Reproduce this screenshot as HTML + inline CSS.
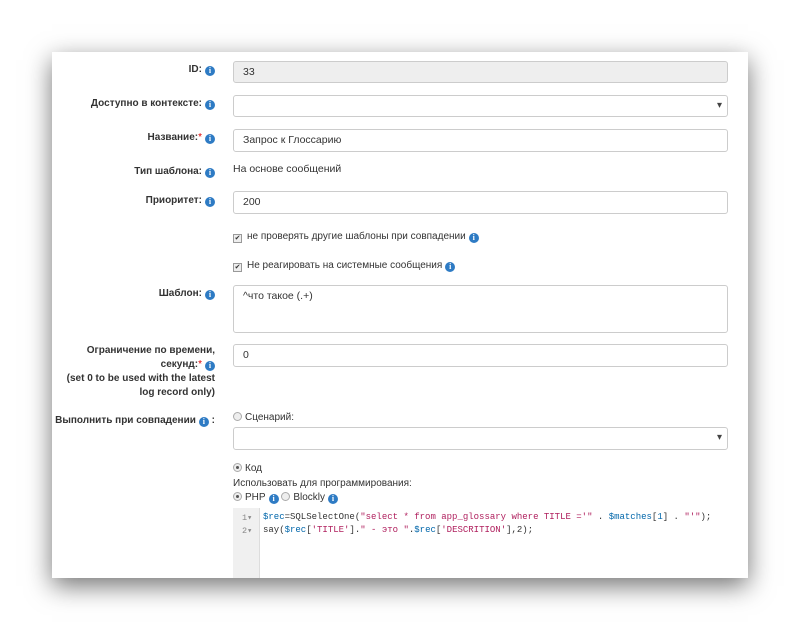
<!DOCTYPE html>
<html><head><meta charset="utf-8"><style>
body{margin:0;width:800px;height:630px;background:#fff;font-family:"Liberation Sans",sans-serif;font-size:10px;color:#333;position:relative;overflow:hidden}
.panel{position:absolute;left:52px;top:52px;width:696px;height:526px;background:#fff;box-shadow:0 8px 24px rgba(0,0,0,.55);overflow:hidden}
.a{position:absolute}
.lbl{position:absolute;right:533px;font-weight:bold;text-align:right;line-height:14px;white-space:nowrap;font-size:10px}
.i{display:inline-block;width:10px;height:10px;border-radius:50%;background:#2e7bc4;color:#fff;font-size:8px;line-height:10px;text-align:center;font-weight:bold;font-family:"Liberation Serif",serif;vertical-align:-1px;margin-left:3px}
.inp{position:absolute;left:181px;width:495px;border:1px solid #ccc;border-radius:3px;background:#fff;box-sizing:border-box;padding-left:9px;line-height:20px;font-size:10.5px}
.sel:after{content:"▾";position:absolute;right:5px;top:0;font-size:10px;color:#444}
.star{color:#d00;font-weight:normal}
.cb{display:inline-block;width:7px;height:7px;border:1px solid #999;background:#eee;vertical-align:-1px;margin-right:5px;font-size:7px;line-height:7px;text-align:center}
.rd{display:inline-block;width:7px;height:7px;border:1px solid #aaa;border-radius:50%;background:#eee;vertical-align:-1px;margin-right:3px;position:relative}
.rd.on:after{content:"";position:absolute;left:2px;top:2px;width:3px;height:3px;border-radius:50%;background:#555}
.code{font-family:"Liberation Mono",monospace;font-size:9px;line-height:13px}
</style></head><body>
<div class="panel">
<div class="lbl" style="top:11px">ID:<span class="i">i</span></div>
<div class="inp" style="top:9px;height:22px;background:#eee">33</div>
<div class="lbl" style="top:45px">Доступно в контексте:<span class="i">i</span></div>
<div class="inp sel" style="top:43px;height:22px"></div>
<div class="lbl" style="top:79px">Название:<span class="star">*</span><span class="i">i</span></div>
<div class="inp" style="top:77px;height:23px">Запрос к Глоссарию</div>
<div class="lbl" style="top:113px">Тип шаблона:<span class="i">i</span></div>
<div class="a" style="left:181px;top:111px;font-size:10.5px">На основе сообщений</div>
<div class="lbl" style="top:142px">Приоритет:<span class="i">i</span></div>
<div class="inp" style="top:139px;height:23px">200</div>
<div class="a" style="left:181px;top:179px"><span class="cb">✔</span>не проверять другие шаблоны при совпадении<span class="i">i</span></div>
<div class="a" style="left:181px;top:208px"><span class="cb">✔</span>Не реагировать на системные сообщения<span class="i">i</span></div>
<div class="lbl" style="top:235px">Шаблон:<span class="i">i</span></div>
<div class="inp" style="top:233px;height:48px;line-height:16px;padding-top:2px">^что такое (.+)</div>
<div class="lbl" style="top:292px">Ограничение по времени,<br>секунд:<span class="star">*</span><span class="i">i</span><br>(set 0 to be used with the latest<br>log record only)</div>
<div class="inp" style="top:292px;height:23px">0</div>
<div class="lbl" style="top:362px">Выполнить при совпадении<span class="i">i</span> :</div>
<div class="a" style="left:181px;top:360px"><span class="rd"></span>Сценарий:</div>
<div class="inp sel" style="top:375px;height:23px"></div>
<div class="a" style="left:181px;top:411px"><span class="rd on"></span>Код</div>
<div class="a" style="left:181px;top:426px">Использовать для программирования:</div>
<div class="a" style="left:181px;top:440px"><span class="rd on"></span>PHP<span class="i">i</span> <span class="rd"></span>Blockly<span class="i">i</span></div>
<div class="a" style="left:181px;top:456px;width:26px;height:80px;background:#f0f0f0;border-right:1px solid #ddd"></div>
<div class="a code" style="left:190px;top:460px;color:#888;font-size:8.5px;line-height:13px">1▾<br>2▾</div>
<div class="a code" style="left:211px;top:459px;white-space:pre"><span style="color:#0066aa">$rec</span>=SQLSelectOne(<span style="color:#b0205e">"select * from app_glossary where TITLE ='"</span> . <span style="color:#0066aa">$matches</span>[<span style="color:#0066aa">1</span>] . <span style="color:#b0205e">"'"</span>);
say(<span style="color:#0066aa">$rec</span>[<span style="color:#b0205e">'TITLE'</span>].<span style="color:#b0205e">" - это "</span>.<span style="color:#0066aa">$rec</span>[<span style="color:#b0205e">'DESCRITION'</span>],2);</div>
</div>
</body></html>
